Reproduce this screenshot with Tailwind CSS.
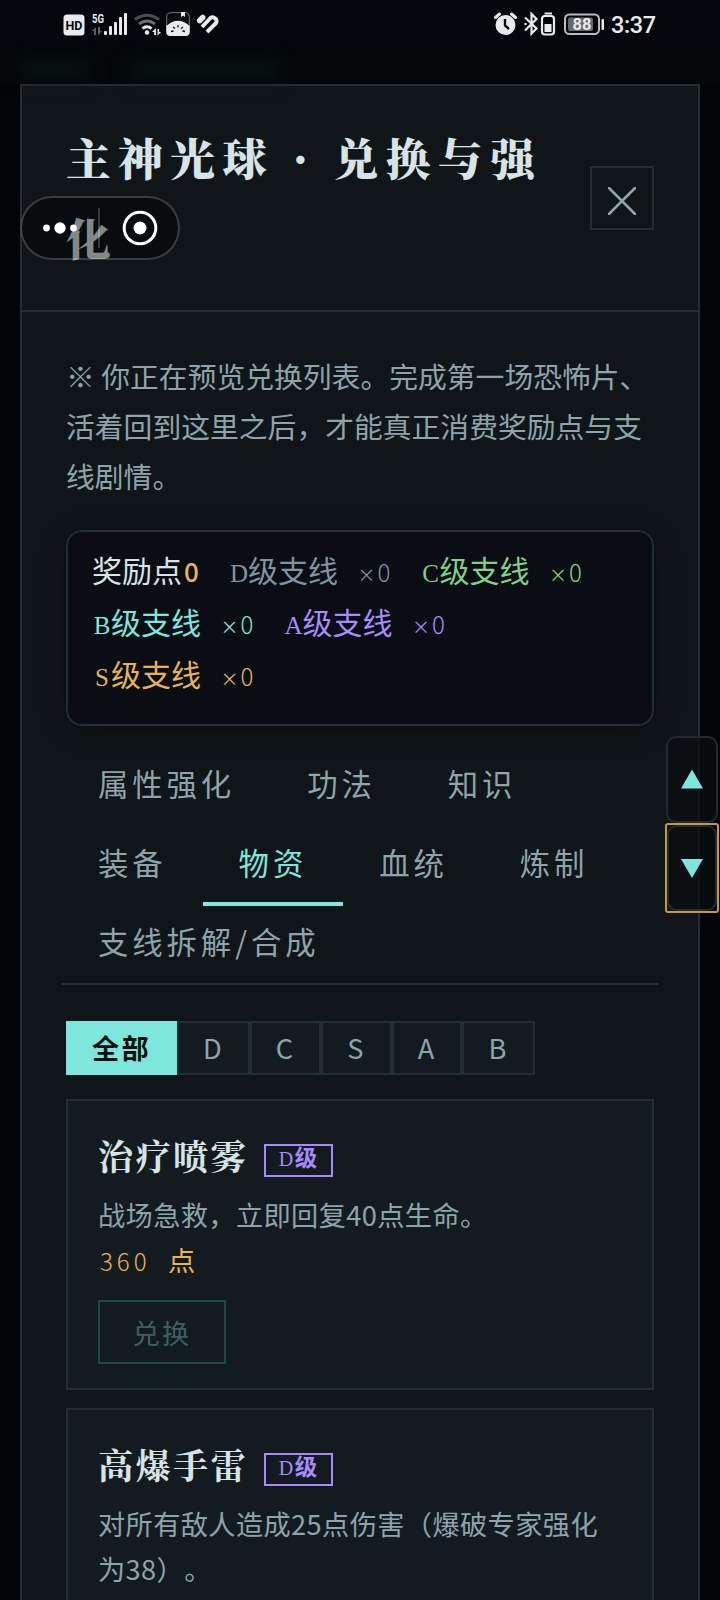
<!DOCTYPE html>
<html lang="zh-CN">
<head>
<meta charset="utf-8">
<title>主神光球</title>
<script src="https://cdn.jsdelivr.net/npm/@tailwindcss/browser@4"></script>
</head>
<body class="relative h-[1600px] w-[720px] overflow-hidden bg-[#020405] font-['Noto_Sans_CJK_SC',sans-serif] text-[#8fa3ab] [text-spacing-trim:space-all]">
<!-- status bar -->
<header class="flex h-[48px] items-center justify-between bg-[#05060b] pl-[63px] pr-[64px] text-[#e8eaeb]">
  <svg class="h-[48px] w-[160px]" viewBox="63 0 160 48" fill="currentColor">
    <rect x="63.500" y="14.500" width="21" height="21" rx="3.500"/>
    <text x="74" y="29.700" text-anchor="middle" font-family="Roboto" font-weight="700" font-size="13" textLength="17" lengthAdjust="spacingAndGlyphs" fill="#05060b">HD</text>
    <text x="92" y="23" font-family="Roboto" font-weight="700" font-size="13" textLength="12" lengthAdjust="spacingAndGlyphs">5G</text>
    <g fill="#5c5e62"><path d="M92 31l4-4v8h-2v-4zM98 27h2v4h2l-4 4z"/></g>
    <rect x="104" y="31" width="3" height="4" rx="1"/><rect x="109" y="26" width="3" height="9" rx="1"/><rect x="114" y="22" width="3" height="13" rx="1"/><rect x="119" y="17" width="3" height="18" rx="1"/><rect x="124" y="13" width="3" height="22" rx="1"/>
    <g fill="none" stroke-width="3"><path d="M135 19.500q12-8.500 24 0" stroke="#4b4d51"/><path d="M139 24q8-6 16 0" stroke="#6a6c70"/><path d="M142.500 28.500q4.500-3.500 9 0" stroke="currentColor"/></g>
    <circle cx="147" cy="32.500" r="2.300"/><path d="M152 32l4-4v7h-1.800v-3zM157.500 29h1.600v3h2l-3.600 3.600z"/>
    <rect x="166.700" y="12.700" width="22.600" height="22.600" rx="4" fill="#07090c" stroke="#77797c"/>
    <path d="M166.300 26q11.700-10.500 23.400 0v6a4 4 0 0 1-4 4h-15.400a4 4 0 0 1-4-4z"/><path d="M181 12h4v5l-2-1.300-2 1.300z"/>
    <g stroke="#111" stroke-width="1.300"><path d="M171 31.500l2.500-.5M173 27l2 1.500M178 25v2.500M183 27l-2 1.500M185 31.500l-2.500-.5"/></g>
    <g fill="none" stroke="currentColor" stroke-width="3.900" stroke-linejoin="round"><path d="M199.700 20.500l3-3" stroke-width="5.500" stroke-linecap="round"/><path d="M202 27l8.500-9a3.900 3.900 0 0 1 5.600 5L207 32"/></g>
  </svg>
  <svg class="h-[48px] w-[164px]" viewBox="492 0 164 48" fill="currentColor">
    <circle cx="505.500" cy="25" r="10"/><path d="M505 19v6.500l4 3.500" fill="none" stroke="#05060b" stroke-width="2.400"/><path d="M495.500 17.500l4-3.500M511.500 14l4 3.500" stroke="currentColor" stroke-width="3" stroke-linecap="round"/>
    <path d="M525 17.500l11.500 11-5 5V14l5 5-11.500 11.500M525.500 23v2" fill="none" stroke="currentColor" stroke-width="2.200"/>
    <rect x="542" y="16" width="12" height="18.500" rx="3" fill="none" stroke="currentColor" stroke-width="2.200"/><rect x="544.500" y="12.500" width="7.500" height="2"/><rect x="544.500" y="24" width="7" height="8"/>
    <rect x="565" y="14.500" width="34" height="19.500" rx="4.500" fill="none" stroke="#b9bbbd" stroke-width="2"/><rect x="568" y="17.500" width="25" height="13.500" rx="2" fill="#66686b"/><rect x="601.500" y="19" width="2.500" height="11" rx="1"/>
    <text x="582" y="30" text-anchor="middle" font-family="Roboto" font-weight="700" font-size="16.500">88</text>
    <text x="611" y="32.500" font-family="Roboto" font-weight="500" font-size="23.500" textLength="45">3:37</text>
  </svg>
</header>
<div class="flex h-[36px] gap-4 bg-[#030708] px-5">
  <div class="mt-3 h-5 w-[70px] bg-[#0b1a19]/60 blur-[9px]"></div>
  <div class="ml-6 mt-3 h-5 w-[150px] bg-[#0b1a19]/60 blur-[9px]"></div>
</div>

<main class="mx-[20px] h-[1516px] overflow-hidden border-2 border-b-0 border-[#232f36] bg-[#101519]">
  <div class="flex h-[226px] items-center justify-between border-b-2 border-[#232f36] px-[44px]">
    <h1 class="-mt-[2px] w-[500px] font-['Noto_Serif_CJK_SC','Noto_Serif_SC','Source_Han_Serif_SC',serif] text-[44.8px] font-black leading-[80px] tracking-[7.3px] text-[#d8e3e5]">主神光球 · 兑换与强化</h1>
    <button class="flex size-[64px] shrink-0 items-center justify-center border-2 border-[#232f36]">
      <svg class="mt-[5px] size-[28px]" viewBox="0 0 28 28" stroke="#93a5ac" stroke-width="2.500" stroke-linecap="round"><path d="M1 1l26 26M27 1L1 27"/></svg>
    </button>
  </div>

  <div class="px-[44px] pt-[39px]">
    <p class="text-[28.8px] leading-[50px]">※ 你正在预览兑换列表。完成第一场恐怖片、活着回到这里之后，才能真正消费奖励点与支线剧情。</p>

    <section class="mt-[29px] flex h-[196px] flex-wrap content-start gap-x-[28px] rounded-[16px] border-2 border-[#232f36] bg-[#0a0d14] px-[24px] pt-[11px] text-[30px] leading-[52px] shadow-[0_4px_24px_rgba(0,0,0,0.35)]">
      <span class="flex h-[52px] items-baseline text-[#d8e3e5]">奖励点<b class="w-[19px] text-center font-['Noto_Sans_CJK_SC'] text-[26px] font-medium text-[#e6b35a]">0</b></span>
      <span class="flex h-[52px] items-baseline text-[#8094a0]"><i class="ml-[1px] w-[18px] text-center font-['Liberation_Serif'] text-[25px] not-italic">D</i>级支线<i class="ml-[19.5px] w-[18px] text-center text-[18px] not-italic">×</i><i class="w-[17px] text-center text-[24px] font-light not-italic">0</i></span>
      <span class="flex h-[52px] items-baseline text-[#84cf87]"><i class="ml-[1px] w-[18px] text-center font-['Liberation_Serif'] text-[25px] not-italic">C</i>级支线<i class="ml-[19.5px] w-[18px] text-center text-[18px] not-italic">×</i><i class="w-[17px] text-center text-[24px] font-light not-italic">0</i></span>
      <span class="flex h-[52px] items-baseline text-[#7fe6dd]"><i class="ml-[1px] w-[18px] text-center font-['Liberation_Serif'] text-[25px] not-italic">B</i>级支线<i class="ml-[19.5px] w-[18px] text-center text-[18px] not-italic">×</i><i class="w-[17px] text-center text-[24px] font-light not-italic">0</i></span>
      <span class="flex h-[52px] items-baseline text-[#a78bfa]"><i class="ml-[1px] w-[18px] text-center font-['Liberation_Serif'] text-[25px] not-italic">A</i>级支线<i class="ml-[19.5px] w-[18px] text-center text-[18px] not-italic">×</i><i class="w-[17px] text-center text-[24px] font-light not-italic">0</i></span>
      <span class="flex h-[52px] items-baseline text-[#e6b35a]"><i class="ml-[1px] w-[18px] text-center font-['Liberation_Serif'] text-[25px] not-italic">S</i>级支线<i class="ml-[19.5px] w-[18px] text-center text-[18px] not-italic">×</i><i class="w-[17px] text-center text-[24px] font-light not-italic">0</i></span>
    </section>

    <nav class="-mx-[4px] mt-[22px] flex h-[237px] flex-wrap border-b-2 border-[#232f36] text-[30.4px] leading-[71px] tracking-[3.9px]">
      <span class="h-[79px] px-[36px]">属性强化</span>
      <span class="h-[79px] px-[36px]">功法</span>
      <span class="h-[79px] px-[36px]">知识</span>
      <span class="h-[79px] px-[36px]">装备</span>
      <span class="h-[79px] border-b-4 border-[#7fe6dd] px-[36px] text-[#7fe6dd]">物资</span>
      <span class="h-[79px] px-[36px]">血统</span>
      <span class="h-[79px] px-[36px]">炼制</span>
      <span class="h-[79px] px-[36px]">支线拆解/合成</span>
    </nav>

    <div class="mt-[36px] flex h-[54px] text-[27.2px] leading-[48px] tracking-[2.2px]">
      <span class="w-[111px] bg-[#7fe6dd] pl-[26px] font-bold leading-[52px] text-[#06100f]">全部</span>
      <span class="w-[73px] border-2 border-[#232f36] bg-[#141b20] text-center">D</span>
      <span class="w-[71px] border-2 border-[#232f36] bg-[#141b20] text-center">C</span>
      <span class="w-[71px] border-2 border-[#232f36] bg-[#141b20] text-center">S</span>
      <span class="w-[70px] border-2 border-[#232f36] bg-[#141b20] text-center">A</span>
      <span class="w-[73px] border-2 border-[#232f36] bg-[#141b20] text-center">B</span>
    </div>

    <article class="mt-[24px] h-[291px] border-2 border-[#232f36] bg-[#141b20] px-[30px] pt-[22px]">
      <div class="flex h-[64px] items-center">
        <h2 class="font-['Noto_Serif_CJK_SC','Noto_Serif_SC','Source_Han_Serif_SC',serif] text-[35.2px] font-bold leading-[64px] tracking-[2.3px] text-[#d8e3e5]">治疗喷雾</h2>
        <span class="ml-[16px] mt-[10px] flex h-[33px] w-[69px] items-baseline justify-center border-2 border-[#a78bfa] text-[22.4px] font-bold leading-[21px] tracking-[1px] text-[#a78bfa]"><b class="w-[16px] font-['Liberation_Serif'] text-[20px] font-normal">D</b>级</span>
      </div>
      <p class="mt-[5px] text-[27.2px] leading-[45px] tracking-[0.4px]">战场急救，立即回复40点生命。</p>
      <p class="flex items-baseline text-[27.2px] leading-[45px] text-[#e6b35a]"><span class="w-[70px] pl-[2px] text-[24px] font-light tracking-[4px]">360</span>点</p>
      <button class="mt-[17px] block h-[64px] w-[128px] border-2 border-[#1f4a4b] text-center text-[27.2px] leading-[60px] tracking-[2.2px] text-[#3e5f62]">兑换</button>
    </article>

    <article class="mt-[18px] h-[291px] border-2 border-[#232f36] bg-[#141b20] px-[30px] pt-[22px]">
      <div class="flex h-[64px] items-center">
        <h2 class="font-['Noto_Serif_CJK_SC','Noto_Serif_SC','Source_Han_Serif_SC',serif] text-[35.2px] font-bold leading-[64px] tracking-[2.3px] text-[#d8e3e5]">高爆手雷</h2>
        <span class="ml-[16px] mt-[10px] flex h-[33px] w-[69px] items-baseline justify-center border-2 border-[#a78bfa] text-[22.4px] font-bold leading-[21px] tracking-[1px] text-[#a78bfa]"><b class="w-[16px] font-['Liberation_Serif'] text-[20px] font-normal">D</b>级</span>
      </div>
      <p class="mt-[5px] text-[27.2px] leading-[45px] tracking-[0.4px]">对所有敌人造成25点伤害（爆破专家强化为38）。</p>
    </article>
  </div>
</main>

<!-- floating capsule menu -->
<div class="absolute left-[20px] top-[196px] h-[64px] w-[160px] rounded-full border-2 border-white/20 bg-black/40">
  <svg class="-ml-[2px] -mt-[2px] h-[64px] w-[160px] max-w-none" viewBox="20 196 160 64" fill="#fff"><circle cx="46.500" cy="228" r="3.400"/><circle cx="60" cy="228" r="5.700"/><circle cx="73.500" cy="228" r="3.400"/><path d="M98 208h2v40h-2z" opacity=".2"/><circle cx="140" cy="228" r="15.800" fill="none" stroke="#fff" stroke-width="3"/><circle cx="140" cy="228" r="6.500"/></svg>
</div>

<!-- floating scroll controls -->
<div class="absolute left-[666px] top-[736px] flex w-[52px] flex-col gap-[2px]">
  <div class="flex h-[87px] items-center justify-center rounded-[10px] border-2 border-[#1f2a31] bg-[#090d10]/75"><svg class="size-[22px]" viewBox="0 0 22 22" fill="#7fe6dd"><path d="M11 .5l11 19H0z"/></svg></div>
  <div class="mx-[1px] h-[86px] rounded-[1px] outline-2 outline-[#c6983f]">
    <div class="flex h-full items-center justify-center rounded-[10px] border-2 border-[#1f2a31] bg-[#090d10]/75"><svg class="size-[22px]" viewBox="0 0 22 22" fill="#7fe6dd"><path d="M11 21l11-19H0z"/></svg></div>
  </div>
</div>
</body>
</html>
